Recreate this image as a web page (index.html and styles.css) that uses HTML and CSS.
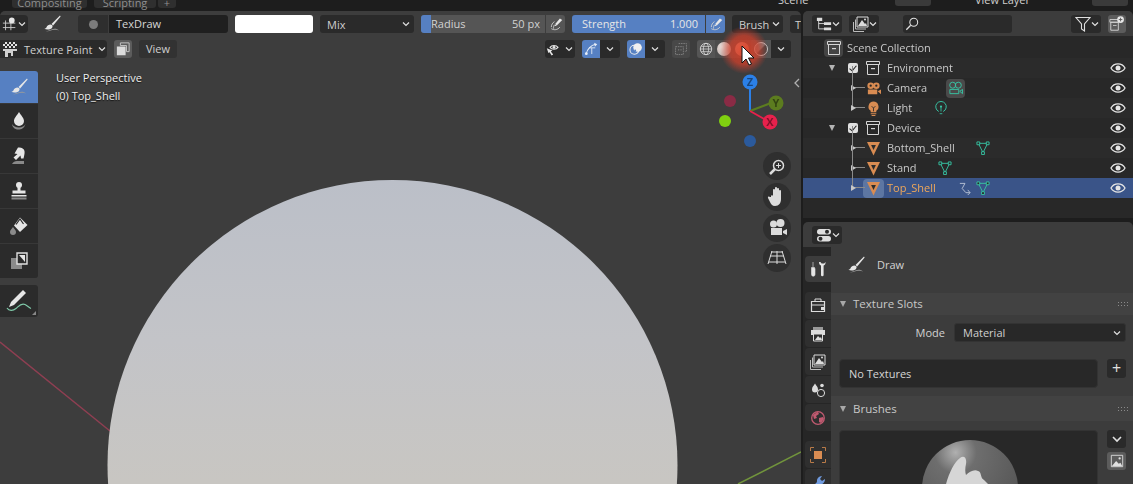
FILE: index.html
```html
<!DOCTYPE html>
<html lang="en">
<head>
<meta charset="utf-8">
<title>Texture Paint</title>
<link rel="stylesheet" href="styles.css">
</head>
<body>
<svg class="sprite" width="0" height="0">
  <defs>
    <symbol id="i-brush" viewBox="0 0 20 20">
      <path d="M18 1.500 9.500 10l1.600 1.600L18.600 2.400z" fill="#e6e6e6"/>
      <path d="M8.600 10.400c-2 0-3.400 1-4 2.600-.3 1-1.200 1.600-2.200 1.800 1.800 1 5.600 1 7.400-.6 1-1 .9-2.300.4-2.900z" fill="#e6e6e6"/>
      <path d="M4 17c3 1 5-1 8-1.200 2-.1 4 .3 5 .8-2-2.200-5-2.200-7.500-1.200-2 .8-3.500 1.600-5.500 1.600z" fill="#9a9a9a"/>
    </symbol>
    <symbol id="i-drop" viewBox="0 0 20 20">
      <path d="M10 1c2 3.500 5 6 5 9a5 5 0 0 1-10 0c0-3 3-5.500 5-9z" fill="#e6e6e6"/>
      <path d="M3 13c.5 4 4 6 7.500 5.500 3-.4 5.500-2.500 6-5.500-1 2-3.500 3.500-6.500 3.500S4 15 3 13z" fill="#8a8a8a"/>
    </symbol>
    <symbol id="i-smear" viewBox="0 0 20 20">
      <path d="M9 1.500c3-.5 6 .8 6.500 3.500.4 2.500-.5 5-1 7.500h-2.500l-.5-3L7 14 4.500 11.500l4-3.500-3-.5z" fill="#e6e6e6"/>
      <path d="M3 18c1-2 3-3 5-3h7v3z" fill="#8a8a8a"/>
    </symbol>
    <symbol id="i-stamp" viewBox="0 0 20 20">
      <circle cx="10" cy="4" r="3" fill="#e6e6e6"/>
      <path d="M8.500 6h3v3.500h5v3h-13v-3h5z" fill="#e6e6e6"/>
      <path d="M2.500 14h15v1.500h-15z" fill="#e6e6e6"/>
      <path d="M2.500 16.500h15v2h-15z" fill="#8a8a8a"/>
    </symbol>
    <symbol id="i-fill" viewBox="0 0 20 20">
      <path d="M11 1.500 18.500 9 11 16 5 9.500z" fill="#e6e6e6"/>
      <path d="M7 8.500 11 3l3.500 5" fill="none" stroke="#2b2b2b" stroke-width="1.200"/>
      <path d="M4 11c1.500 2 3 3.500 3 5a3 3 0 0 1-6 0c0-1.500 1.500-3 3-5z" fill="#8a8a8a"/>
    </symbol>
    <symbol id="i-clone" viewBox="0 0 20 20">
      <path d="M2 7h11v11H2z" fill="#8a8a8a"/>
      <path d="M8 2h10v11H8z" fill="#2b2b2b"/>
      <path d="M8 2h10v11H8z" fill="none" stroke="#e0e0e0" stroke-width="1.400"/>
      <path d="M10 4h6v7z" fill="#e6e6e6"/>
    </symbol>
    <symbol id="i-annot" viewBox="0 0 28 24">
      <path d="M18 1 6 13l-2 5 5-2L21 4z" fill="#e6e6e6"/>
      <path d="M2 19c2 3 6 3 9 .5s5-6 9-4c2 1 4 3 6 4" fill="none" stroke="#7fc8a8" stroke-width="1.200"/>
    </symbol>
    <symbol id="i-paintmode" viewBox="0 0 16 16">
      <path d="M1 1h14v6H1z" fill="#e0e0e0"/>
      <path d="M1 1h2v2H1zm4 0h2v2H5zm4 0h2v2H9zm4 0h2v2h-2zM3 3h2v2H3zm4 0h2v2H7zm4 0h2v2h-2zM1 5h2v2H1zm4 0h2v2H5zm4 0h2v2H9zm4 0h2v2h-2z" fill="#2b2b2b"/>
      <path d="M1 8h14v2h-4v5H9v-3H6v4H3v-6H1z" fill="#d0d0d0"/>
    </symbol>
    <symbol id="i-chev" viewBox="0 0 8 6"><path d="M1 1.500 4 4.500l3-3" fill="none" stroke="#e0e0e0" stroke-width="1.200"/></symbol>
    <symbol id="i-modeicon" viewBox="0 0 18 16">
      <path d="M1 7h14M1 12h14M4 4v11M10 6v9" fill="none" stroke="#cfcfcf" stroke-width="1"/>
      <circle cx="11" cy="4" r="3.200" fill="#e6e6e6"/>
    </symbol>
    <symbol id="i-wirebox" viewBox="0 0 16 16">
      <path d="M5 1h10v10h-3V4H5z" fill="none" stroke="#cfcfcf" stroke-width="1"/>
      <path d="M1 5h10v10H1z" fill="#dcdcdc"/>
    </symbol>
    <symbol id="i-falloff" viewBox="0 0 18 18">
      <path d="M14 2l3 2-7 7-2-2z" fill="#e8e8e8"/>
      <path d="M8 9.500 7 12l3-1z" fill="#e8e8e8"/>
      <path d="M3 13c0-3 1.500-5.500 4-7M6 15c-.5-2 0-3.500 1-5M3 15c3 2 8 2 11-2" fill="none" stroke="#cfcfcf" stroke-width="1.200"/>
    </symbol>
    <symbol id="i-vis" viewBox="0 0 20 16">
      <path d="M5 6c2-3 8-3 10 0-2 3-8 3-10 0z" fill="none" stroke="#e6e6e6" stroke-width="1.300"/>
      <circle cx="10" cy="6" r="1.800" fill="#e6e6e6"/>
      <path d="M1 7l7 3-2 1 3 4-2 1-2.500-4L3 13z" fill="#e6e6e6"/>
    </symbol>
    <symbol id="i-gizmo" viewBox="0 0 18 18">
      <path d="M3 15C4 9 9 4 15 3" fill="none" stroke="#e8eef8" stroke-width="1.300"/>
      <path d="M13 1l4 2-3 3z" fill="#e8eef8"/>
      <circle cx="3" cy="15" r="1.800" fill="#e8eef8"/>
      <path d="M6.500 7.500h8M10 7.500v8" fill="none" stroke="#e8eef8" stroke-width="1.100"/>
    </symbol>
    <symbol id="i-overlay" viewBox="0 0 18 18">
      <circle cx="7" cy="10" r="5.800" fill="none" stroke="#f0f0f0" stroke-width="1.300"/>
      <circle cx="11" cy="7" r="5.500" fill="#f0f0f0"/>
      <circle cx="8" cy="11" r="1.200" fill="#5680c2"/>
    </symbol>
    <symbol id="i-xray" viewBox="0 0 18 18">
      <path d="M6 2h10v10h-2M2 6h10v10H2z" fill="none" stroke="#8c8c8c" stroke-width="1" stroke-dasharray="2 1"/>
      <circle cx="6" cy="10" r=".8" fill="#8c8c8c"/><circle cx="9" cy="10" r=".8" fill="#8c8c8c"/>
    </symbol>
    <symbol id="i-wire" viewBox="0 0 16 16">
      <circle cx="8" cy="8" r="6.500" fill="none" stroke="#dcdcdc" stroke-width="1"/>
      <ellipse cx="8" cy="8" rx="3" ry="6.500" fill="none" stroke="#dcdcdc" stroke-width=".8"/>
      <path d="M1.500 8h13M2.500 5h11M2.500 11h11" fill="none" stroke="#dcdcdc" stroke-width=".8"/>
    </symbol>
    <symbol id="i-eye" viewBox="0 0 16 12">
      <path d="M1 6c3-5.500 11-5.500 14 0-3 5.500-11 5.500-14 0z" fill="none" stroke="#e6e6e6" stroke-width="1.300"/>
      <circle cx="8" cy="6" r="2.500" fill="#e6e6e6"/>
    </symbol>
    <symbol id="i-coll" viewBox="0 0 14 14">
      <path d="M.5.500h13v3H.5zM1.500 3.500h11v10h-11z" fill="none" stroke="#d4d4d4" stroke-width="1"/>
      <path d="M5 7h4v1.200H5z" fill="#d4d4d4"/>
    </symbol>
    <symbol id="i-camera" viewBox="0 0 16 14">
      <circle cx="5" cy="4" r="3.500" fill="#d98c52"/><circle cx="11" cy="4" r="3.500" fill="#d98c52"/>
      <circle cx="5" cy="4" r="1.200" fill="#282828"/><circle cx="11" cy="4" r="1.200" fill="#282828"/>
      <path d="M2 8h10v5H2zM12.500 10 16 8v5z" fill="#d98c52"/>
    </symbol>
    <symbol id="i-camdata" viewBox="0 0 16 14">
      <circle cx="5" cy="4" r="3.200" fill="none" stroke="#37c4a4" stroke-width="1"/><circle cx="11" cy="4" r="3.200" fill="none" stroke="#37c4a4" stroke-width="1"/>
      <path d="M2 8.500h9.500v4.500H2zM12.500 10.500 15.500 8.500v4.500z" fill="none" stroke="#37c4a4" stroke-width="1"/>
    </symbol>
    <symbol id="i-light" viewBox="0 0 14 16">
      <path d="M7 .5a5.500 5.500 0 0 1 3 10v1.500H4v-1.500A5.500 5.500 0 0 1 7 .5z" fill="#d98c52"/>
      <path d="M5 5.500l2 2 2-2M7 7.500V11" fill="none" stroke="#282828" stroke-width=".9"/>
      <path d="M4 13h6v1H4zM5 15h4v1H5z" fill="#d98c52"/>
    </symbol>
    <symbol id="i-lightdata" viewBox="0 0 14 16">
      <path d="M4.500 12A6 6 0 1 1 9.500 12" fill="none" stroke="#37c4a4" stroke-width="1.100"/>
      <circle cx="7" cy="6.500" r="1.300" fill="#37c4a4"/>
      <path d="M7 7.500v4.500M5.500 14.500h3" fill="none" stroke="#37c4a4" stroke-width="1"/>
    </symbol>
    <symbol id="i-mesh" viewBox="0 0 14 15">
      <path d="M.5 1h13L7 14.500z" fill="#d98c52"/>
      <path d="M4.600 4h4.800L7 9z" fill="#2c2c2c"/>
    </symbol>
    <symbol id="i-meshdata" viewBox="0 0 14 15">
      <path d="M2 2.500h10L7 12.500z" fill="none" stroke="#37c4a4" stroke-width="1"/>
      <path d="M.5 1h3v3h-3zM10.500 1h3v3h-3zM5.500 11.500h3v3h-3z" fill="#282828" stroke="#37c4a4" stroke-width="1"/>
    </symbol>
    <symbol id="i-mod" viewBox="0 0 14 14">
      <path d="M2 1.500h5.500L4.500 7l4 4.500H13M10.500 8.500 13 11.500l-2.500 2.500" fill="none" stroke="#b8c2d6" stroke-width="1"/>
    </symbol>
    <symbol id="i-tree" viewBox="0 0 18 16">
      <path d="M1 1h6v3.500H1zM9 6h8v3H9zM9 12h8v3H9z" fill="#dcdcdc"/>
      <path d="M3 4.500V13.500h6M3 7.500h6" fill="none" stroke="#dcdcdc" stroke-width="1"/>
    </symbol>
    <symbol id="i-images" viewBox="0 0 16 16">
      <path d="M4 1h11v10H4z" fill="none" stroke="#dcdcdc" stroke-width="1"/>
      <path d="M5 10l4-6 3 4 1-1 1 3z" fill="#dcdcdc"/><circle cx="12" cy="3.500" r="1" fill="#dcdcdc"/>
      <path d="M2.500 3.500V13H13M.5 6v9.500H11" fill="none" stroke="#bcbcbc" stroke-width="1"/>
    </symbol>
    <symbol id="i-search" viewBox="0 0 16 16">
      <circle cx="10" cy="6" r="4.500" fill="none" stroke="#e0e0e0" stroke-width="1.200"/>
      <path d="M6.500 9.500 1.500 14.500" stroke="#e0e0e0" stroke-width="1.500"/>
    </symbol>
    <symbol id="i-filter" viewBox="0 0 16 16"><path d="M1 1.500h14L9.500 8v7l-3-2V8z" fill="none" stroke="#e0e0e0" stroke-width="1.100"/></symbol>
    <symbol id="i-newcoll" viewBox="0 0 18 18">
      <path d="M1 4h10v3H1zM2 7h8.500v9H2z" fill="none" stroke="#d8d8d8" stroke-width="1"/>
      <path d="M4.500 10h4v1h-4z" fill="#d8d8d8"/>
      <circle cx="13" cy="4" r="3.800" fill="#e8e8e8"/>
      <path d="M11 4h4M13 2v4" stroke="#585858" stroke-width="1"/>
    </symbol>
    <symbol id="i-editor" viewBox="0 0 16 14">
      <rect x="1" y="1" width="14" height="5.500" rx="2.700" fill="#e0e0e0"/>
      <rect x="1" y="8" width="14" height="5.500" rx="2.700" fill="#e0e0e0"/>
      <circle cx="11" cy="3.700" r="2" fill="#2b2b2b"/><circle cx="4.500" cy="10.700" r="2" fill="#2b2b2b"/>
    </symbol>
    <symbol id="i-tool" viewBox="0 0 16 16">
      <path d="M3 1v5M1.500 6.500h3L5 8v5.500a1.500 1.500 0 0 1-3.500 0V8z" fill="#e6e6e6" stroke="#e6e6e6" stroke-width=".6"/>
      <path d="M9 1c0 2 .5 3 2 3.500V14a1.300 1.300 0 0 0 2.600 0V4.500c1.500-.5 2-1.500 2-3.500l-1.500 1.500h-2.500L10.400 1z" fill="#e6e6e6"/>
    </symbol>
    <symbol id="i-render" viewBox="0 0 16 16">
      <path d="M5 1h6v2.500H5z" fill="none" stroke="#dcdcdc" stroke-width="1"/>
      <path d="M1.500 3.500h13v10h-13z" fill="none" stroke="#dcdcdc" stroke-width="1.200"/>
      <path d="M2 6.500h12v1H2zM11 9h3v3h-3z" fill="#dcdcdc"/>
    </symbol>
    <symbol id="i-output" viewBox="0 0 16 16">
      <path d="M1 4h14v5H1z" fill="#dcdcdc"/><path d="M3 1h10v3H3z" fill="#9a9a9a"/>
      <path d="M3.500 8h9v7h-9z" fill="#2c2c2c" stroke="#dcdcdc"/><path d="M5 14l3-4 2 2 1-1 1 3z" fill="#dcdcdc"/>
    </symbol>
    <symbol id="i-scene" viewBox="0 0 16 16">
      <path d="M5 1.500c1.500 2.500 3 3.500 3 6a3 3 0 0 1-6 0c0-2.500 1.500-3.500 3-6z" fill="#dcdcdc"/>
      <circle cx="11" cy="11" r="3.600" fill="#2c2c2c" stroke="#dcdcdc"/><circle cx="12" cy="3.500" r="1.800" fill="#dcdcdc"/>
    </symbol>
    <symbol id="i-world" viewBox="0 0 16 16">
      <circle cx="8" cy="8" r="6.300" fill="none" stroke="#c05a70" stroke-width="1.300"/>
      <path d="M3 5c2-1 3-3 5-3l1 2-3 2 1 2-3 1zM9 8l4-1 1 2-3 4-2-1z" fill="#c05a70"/>
    </symbol>
    <symbol id="i-object" viewBox="0 0 16 16">
      <path d="M4 4h8v8H4z" fill="#d98c52"/>
      <path d="M.5 4V.5H4M12 .5h3.500V4M15.500 12v3.500H12M4 15.500H.5V12" fill="none" stroke="#b87a48" stroke-width="1"/>
    </symbol>
    <symbol id="i-wrench" viewBox="0 0 16 16">
      <path d="M15 4 12 6 10 4l2-3a5 5 0 0 0-5 6L1.500 13 4 15.500 9.500 9.500A5 5 0 0 0 15 4z" fill="#6f9ade"/>
    </symbol>
    <symbol id="i-picture" viewBox="0 0 16 16">
      <path d="M1.500 1.500h13v13h-13z" fill="none" stroke="#e0e0e0"/>
      <path d="M2 14l5-6 3 3 2-1 2 4z" fill="#e0e0e0"/><circle cx="11" cy="5" r="1.300" fill="#e0e0e0"/>
    </symbol>
  </defs>
</svg>

<div class="app">
  <div class="topbar">
    <span class="tab tab-a">Compositing</span>
    <span class="tab tab-b">Scripting</span>
    <span class="tab tab-c">+</span>
    <span class="top-scene">Scene</span>
    <span class="top-box top-box-a"></span>
    <span class="top-layer">View Layer</span>
    <span class="top-box top-box-b"></span>
  </div>
  <div class="main">
    <section class="viewport">
      <svg class="scene-bg" viewBox="0 11 801 473" width="801" height="473">
        <defs>
          <linearGradient id="ball" x1="0" y1="0" x2="0" y2="1">
            <stop offset="0" stop-color="#bbbfc8"/>
            <stop offset=".28" stop-color="#c3c4c8"/>
            <stop offset=".53" stop-color="#c8c6c2"/>
          </linearGradient>
        </defs>
        <path d="M0 342 110 431" stroke="#8f3f52" stroke-width="1.500"/>
        <path d="M738 484 801 452" stroke="#71943c" stroke-width="1.500"/>
        <circle cx="392.500" cy="465" r="285" fill="url(#ball)"/>
      </svg>

      <div class="hdr hdr-tool">
        <button class="btn dark w-mode"><svg class="ic16"><use href="#i-modeicon"/></svg><svg class="chev"><use href="#i-chev"/></svg></button>
        <svg class="ic-brush"><use href="#i-brush"/></svg>
        <div class="brushsel">
          <span class="brushsel-ic"><span class="ballmini"></span></span>
          <span class="brushsel-name">TexDraw</span>
        </div>
        <span class="swatch"></span>
        <button class="btn dark w-mix"><span>Mix</span><svg class="chev"><use href="#i-chev"/></svg></button>
        <div class="slider s-radius"><span class="fill"></span><span class="s-label">Radius</span><span class="s-val">50 px</span></div>
        <button class="pen"><svg class="ic14"><use href="#i-falloff"/></svg></button>
        <div class="slider s-strength"><span class="s-label">Strength</span><span class="s-val">1.000</span></div>
        <button class="pen on"><svg class="ic14"><use href="#i-falloff"/></svg></button>
        <button class="btn dark w-brush"><span>Brush</span><svg class="chev"><use href="#i-chev"/></svg></button>
        <button class="btn dark w-cut"><span>T</span></button>
      </div>

      <div class="hdr hdr-view">
        <button class="btn dark w-tp"><svg class="ic16"><use href="#i-paintmode"/></svg><span>Texture Paint</span><svg class="chev"><use href="#i-chev"/></svg></button>
        <button class="sq grey"><svg class="ic14"><use href="#i-wirebox"/></svg></button>
        <button class="btn dim w-view"><span class="up">View</span></button>
        <div class="hdr-right">
          <div class="grp"><span class="cell c-dark w18"><svg class="ic16"><use href="#i-vis"/></svg></span><span class="cell c-dark w12"><svg class="chev"><use href="#i-chev"/></svg></span></div>
          <div class="grp"><span class="cell c-blue w18"><svg class="ic14"><use href="#i-gizmo"/></svg></span><span class="cell c-dark w20"><svg class="chev"><use href="#i-chev"/></svg></span></div>
          <div class="grp"><span class="cell c-blue w18"><svg class="ic14"><use href="#i-overlay"/></svg></span><span class="cell c-dark w20"><svg class="chev"><use href="#i-chev"/></svg></span></div>
          <span class="cell c-dis w18 solo"><svg class="ic14"><use href="#i-xray"/></svg></span>
          <div class="grp">
            <span class="cell c-grey w18"><svg class="ic14"><use href="#i-wire"/></svg></span>
            <span class="cell c-mid w18"><span class="shade shade-solid"></span></span>
            <span class="cell c-mid w18"><span class="shade shade-mat"></span></span>
            <span class="cell c-grey w20"><span class="shade shade-rend"></span></span>
            <span class="cell c-dark w20"><svg class="chev"><use href="#i-chev"/></svg></span>
          </div>
        </div>
      </div>

      <div class="vp-body">
        <div class="tools">
          <div class="toolgrp">
            <span class="tool active"><svg class="ic20"><use href="#i-brush"/></svg></span>
            <span class="tool"><svg class="ic20"><use href="#i-drop"/></svg></span>
            <span class="tool"><svg class="ic20"><use href="#i-smear"/></svg></span>
            <span class="tool"><svg class="ic20"><use href="#i-stamp"/></svg></span>
            <span class="tool"><svg class="ic20"><use href="#i-fill"/></svg></span>
            <span class="tool"><svg class="ic20"><use href="#i-clone"/></svg></span>
          </div>
          <div class="toolgrp annot"><svg class="ic-annot"><use href="#i-annot"/></svg></div>
        </div>
        <div class="vp-info">
          <div>User Perspective</div>
          <div>(0) Top_Shell</div>
        </div>
      </div>

      <svg class="overlay" viewBox="0 11 801 473" width="801" height="473">
        <defs>
          <radialGradient id="glow">
            <stop offset="0" stop-color="#e23b20" stop-opacity=".85"/>
            <stop offset=".6" stop-color="#d8402a" stop-opacity=".7"/>
            <stop offset="1" stop-color="#c84030" stop-opacity="0"/>
          </radialGradient>
        </defs>
        <circle cx="744" cy="50" r="24" fill="url(#glow)"/>
        <path d="M742 46v17l4-4 3 6 2.500-1-3-6h5.500z" fill="#fff" stroke="#111" stroke-width="1"/>

        <path d="M750 111V88" stroke="#2b80e8" stroke-width="2"/>
        <path d="M750 111 771 103" stroke="#5c7c1f" stroke-width="2"/>
        <path d="M750 111 766 120" stroke="#e8214c" stroke-width="2"/>
        <circle cx="750" cy="82" r="7.500" fill="#2b80e8"/>
        <circle cx="776" cy="103" r="7.500" fill="#5c7c1f"/>
        <circle cx="770" cy="122" r="7.500" fill="#e8214c"/>
        <circle cx="730" cy="101" r="6" fill="#8a2b45"/>
        <circle cx="725" cy="121" r="6" fill="#80d010"/>
        <circle cx="750" cy="141" r="6" fill="#2b5a9c"/>
        <text class="gz" x="750" y="86">Z</text>
        <text class="gz" x="776" y="107">Y</text>
        <text class="gz" x="770" y="126">X</text>

        <path d="M799 79 795 83 799 87" fill="none" stroke="#b0b0b0" stroke-width="1.300"/>

        <g fill="#2f2f2f">
          <circle cx="777" cy="166" r="14"/><circle cx="777" cy="197" r="14"/>
          <circle cx="777" cy="228" r="14"/><circle cx="777" cy="258" r="14"/>
        </g>
        <g fill="none" stroke="#dcdcdc" stroke-width="1.500">
          <circle cx="778.500" cy="165.500" r="5"/>
          <path d="M775 169 770 174" stroke-width="2.500"/>
          <path d="M776 165.500h5M778.500 163v5" stroke-width="1"/>
          <path d="M770 256h14M769 262h16M771 252h12M772 251l-4 13M777 251v13M782 251l4 13" stroke-width="1"/>
        </g>
        <path d="M771 197v-1c0-1 2-1 2 0v-6c0-1.500 2-1.500 2 0v-2c0-1.500 2-1.500 2 0v1c0-1.500 2-1.500 2 0v2c0-1.500 2-1.500 2 0v8c0 4-2 7-6 7-3 0-4-2-5-4l-2-4c-.5-1.500 1-2 2-1z" fill="#dcdcdc"/>
        <circle cx="773.500" cy="224" r="3.500" fill="#dcdcdc"/><circle cx="780.500" cy="223" r="4" fill="#dcdcdc"/>
        <path d="M771 228h11v7h-11zM783 231l4-2v6l-4-2z" fill="#dcdcdc"/>
      </svg>
    </section>

    <aside class="right">
      <section class="outliner">
        <div class="ol-hdr">
          <button class="btn dark w-ol1"><svg class="ic16"><use href="#i-tree"/></svg><svg class="chev"><use href="#i-chev"/></svg></button>
          <button class="btn dark w-ol2"><svg class="ic16"><use href="#i-images"/></svg><svg class="chev"><use href="#i-chev"/></svg></button>
          <span class="search"><svg class="ic14"><use href="#i-search"/></svg></span>
          <button class="btn dark w-ol3"><svg class="ic16"><use href="#i-filter"/></svg><svg class="chev"><use href="#i-chev"/></svg></button>
          <button class="sq grey"><svg class="ic16"><use href="#i-newcoll"/></svg></button>
        </div>
        <div class="tree">
          <div class="row r-root"><span class="root-ic"><svg class="ic14"><use href="#i-coll"/></svg></span><span class="lbl">Scene Collection</span></div>
          <div class="row r-coll alt"><span class="tw"></span><span class="chk"></span><svg class="ic14"><use href="#i-coll"/></svg><span class="lbl">Environment</span><svg class="eye"><use href="#i-eye"/></svg></div>
          <div class="row r-obj"><span class="branch"></span><svg class="ic-obj"><use href="#i-camera"/></svg><span class="lbl">Camera</span><span class="data-box"><svg class="ic14"><use href="#i-camdata"/></svg></span><svg class="eye"><use href="#i-eye"/></svg></div>
          <div class="row r-obj alt"><span class="branch"></span><svg class="ic-obj"><use href="#i-light"/></svg><span class="lbl">Light</span><svg class="ic14 d-light"><use href="#i-lightdata"/></svg><svg class="eye"><use href="#i-eye"/></svg></div>
          <div class="row r-coll"><span class="tw"></span><span class="chk"></span><svg class="ic14"><use href="#i-coll"/></svg><span class="lbl">Device</span><svg class="eye"><use href="#i-eye"/></svg></div>
          <div class="row r-obj alt"><span class="branch"></span><svg class="ic-obj"><use href="#i-mesh"/></svg><span class="lbl">Bottom_Shell</span><svg class="ic14 d-bottom"><use href="#i-meshdata"/></svg><svg class="eye"><use href="#i-eye"/></svg></div>
          <div class="row r-obj"><span class="branch"></span><svg class="ic-obj"><use href="#i-mesh"/></svg><span class="lbl">Stand</span><svg class="ic14 d-stand"><use href="#i-meshdata"/></svg><svg class="eye"><use href="#i-eye"/></svg></div>
          <div class="row r-obj sel"><span class="branch"></span><span class="sel-ic"><svg class="ic-obj"><use href="#i-mesh"/></svg></span><span class="lbl">Top_Shell</span><svg class="ic13 d-mod"><use href="#i-mod"/></svg><svg class="ic14 d-top"><use href="#i-meshdata"/></svg><svg class="eye"><use href="#i-eye"/></svg></div>
        </div>
      </section>

      <section class="props">
        <div class="props-hdr"><button class="btn dark w-ol1"><svg class="ic16"><use href="#i-editor"/></svg><svg class="chev"><use href="#i-chev"/></svg></button></div>
        <div class="props-body">
          <nav class="tabs">
            <span class="ptab active"><svg class="ic16"><use href="#i-tool"/></svg></span>
            <div class="tabgrp">
              <span class="ptab"><svg class="ic16"><use href="#i-render"/></svg></span>
              <span class="ptab"><svg class="ic16"><use href="#i-output"/></svg></span>
              <span class="ptab"><svg class="ic16"><use href="#i-images"/></svg></span>
              <span class="ptab"><svg class="ic16"><use href="#i-scene"/></svg></span>
              <span class="ptab"><svg class="ic16"><use href="#i-world"/></svg></span>
            </div>
            <div class="tabgrp">
              <span class="ptab"><svg class="ic16"><use href="#i-object"/></svg></span>
              <span class="ptab"><svg class="ic16"><use href="#i-wrench"/></svg></span>
            </div>
          </nav>
          <div class="panel">
            <div class="toolname"><svg class="ic20"><use href="#i-brush"/></svg><span class="up">Draw</span></div>
            <div class="sec-hd"><span class="caret"></span><span class="up">Texture Slots</span><span class="grip"></span></div>
            <div class="sec-slots">
              <div class="mode-row"><span class="mode-lbl">Mode</span><button class="btn dark w-material"><span>Material</span><svg class="chev"><use href="#i-chev"/></svg></button></div>
              <div class="list-row"><div class="nolist">No Textures</div><button class="sq dark2 plus">+</button></div>
            </div>
            <div class="sec-hd sec-brushes"><span class="caret"></span><span>Brushes</span><span class="grip"></span></div>
            <div class="list-row brush-row">
              <div class="preview">
                <div class="preview-ball">
                  <svg class="preview-mark" viewBox="0 0 96 60" width="96" height="60">
                    <path d="M23 48C26 35 32 22 38 18C42 15 45 18 44 24C43 28 43 32 44 35C47 32 52 29 56 31C60 32 58 38 62 40L70 48z" fill="#d6d6d6"/>
                  </svg>
                </div>
              </div>
              <div class="side-btns">
                <button class="sq dark2"><svg class="chev chev-lg"><use href="#i-chev"/></svg></button>
                <button class="sq grey"><svg class="ic14"><use href="#i-picture"/></svg></button>
              </div>
            </div>
          </div>
        </div>
      </section>
    </aside>
  </div>
</div>
</body>
</html>
```

FILE: styles.css
```css
* { box-sizing: border-box; }
html, body { margin: 0; padding: 0; background: #1d1d1d; }
body {
  width: 1133px;
  height: 484px;
  overflow: hidden;
  font-family: "Open Sans", "DejaVu Sans", sans-serif;
  font-size: 11px;
  color: #d2d2d2;
  white-space: nowrap;
}
.sprite { position: absolute; }
button { font: inherit; color: inherit; border: 0; padding: 0; margin: 0; }
svg { display: block; flex: none; }
.up { padding-bottom: 2px; }

.app { display: flex; flex-direction: column; width: 1133px; height: 484px; filter: blur(.35px); }

/* top strip */
.topbar { display: flex; height: 11px; overflow: hidden; background: #1d1d1d; flex: none; }
.tab, .top-box { height: 20px; margin-top: -12px; border-radius: 3px; background: #2f2f2f; color: #8e8e8e; text-align: center; line-height: 29px; flex: none; }
.tab-a { width: 75px; margin-left: 12px; }
.tab-b { width: 62px; margin-left: 7px; }
.tab-c { width: 18px; margin-left: 2px; }
.top-scene { width: 30px; margin: -8px 0 0 602px; color: #cfcfcf; height: 13px; flex: none; }
.top-box { width: 36px; height: 18px; background: #3a3a3a; }
.top-box-a { margin-left: 87px; }
.top-layer { width: 60px; margin: -8px 0 0 44px; color: #cfcfcf; height: 13px; flex: none; }
.top-box-b { margin-left: 57px; }

.main { display: flex; gap: 2px; flex: 1; min-height: 0; }

/* viewport */
.viewport { position: relative; width: 801px; flex: none; background: #3d3d3d; overflow: hidden; border-radius: 5px 5px 0 0; }
.scene-bg { position: absolute; left: 0; top: 0; }
.overlay { position: absolute; left: 0; top: 0; pointer-events: none; }
.gz { font-family: "Open Sans", sans-serif; font-size: 11px; font-weight: 700; text-anchor: middle; fill: rgba(0,0,0,.45); }

.hdr { position: relative; display: flex; align-items: center; }
.hdr > * { flex: none; }
.hdr-tool { height: 25px; padding-top: 1px; }
.hdr-view { height: 26px; }
.hdr-right { display: flex; align-items: center; gap: 7px; margin-left: auto; padding-right: 10px; }

.btn { display: flex; align-items: center; height: 18px; border-radius: 3px; color: #cfcfcf; text-align: left; }
.dark { background: #2a2a2a; }
.dim { background: #323232; justify-content: center; }
.chev { width: 8px; height: 6px; margin-left: auto; }
.chev-lg { width: 12px; height: 8px; margin: 0; }
.ic13 { width: 13px; height: 13px; }
.ic14 { width: 14px; height: 14px; }
.ic16 { width: 16px; height: 16px; }
.ic20 { width: 20px; height: 20px; }
.ic-obj { width: 15px; height: 15px; }

.w-mode { width: 28px; padding: 0 4px 0 2px; border-radius: 0 4px 4px 0; }
.ic-brush { width: 20px; height: 20px; margin-left: 14px; }
.brushsel { display: flex; width: 150px; height: 18px; margin-left: 16px; border-radius: 3px; overflow: hidden; }
.brushsel-ic { display: flex; align-items: center; justify-content: center; width: 30px; background: #2e2e2e; margin-right: 1px; }
.ballmini { width: 9px; height: 9px; border-radius: 50%; background: #7c7c7c; }
.brushsel-name { flex: 1; background: #1f1f1f; padding-left: 7px; line-height: 18px; color: #d6d6d6; }
.swatch { width: 78px; height: 18px; margin-left: 7px; border-radius: 3px; background: #fff; }
.w-mix { width: 94px; margin-left: 7px; padding: 0 4px 0 7px; }

.slider { position: relative; display: flex; justify-content: space-between; align-items: center; height: 18px; overflow: hidden; }
.s-radius { width: 124px; margin-left: 7px; padding: 0 5px 0 10px; background: #555; border-radius: 3px 0 0 3px; }
.s-strength { width: 133px; margin-left: 7px; padding: 0 7px 0 10px; background: #5680c2; border-radius: 3px 0 0 3px; color: #e6e6e6; }
.fill { position: absolute; left: 0; top: 0; bottom: 0; width: 10px; background: #5680c2; }
.s-label, .s-val { position: relative; padding-bottom: 2px; }
.pen { display: flex; align-items: center; justify-content: center; width: 19px; height: 18px; margin-left: 1px; background: #555; border-radius: 0 3px 3px 0; }
.pen.on { background: #5680c2; }
.w-brush { width: 51px; margin-left: 7px; padding: 0 3px 0 7px; }
.w-cut { width: 20px; margin-left: 7px; padding-left: 5px; }

.w-tp { width: 107px; padding: 0 5px 0 2px; border-radius: 0 4px 4px 0; gap: 6px; }
.sq { display: flex; align-items: center; justify-content: center; width: 18px; height: 18px; border-radius: 3px; flex: none; }
.grey { background: #5c5c5c; }
.dark2 { background: #2a2a2a; }
.hdr-view .sq { margin-left: 7px; }
.w-view { width: 38px; margin-left: 7px; }

.grp { display: flex; border-radius: 3px; overflow: hidden; }
.cell { display: flex; align-items: center; justify-content: center; height: 18px; }
.w12 { width: 12px; }
.w18 { width: 18px; }
.w20 { width: 20px; }
.c-dark { background: #2a2a2a; }
.c-blue { background: #5680c2; }
.c-grey { background: #555; }
.c-mid { background: #4c4c4c; }
.c-dis { background: #484848; }
.solo { border-radius: 3px; }
.c-dark .chev { margin: 0; }
.shade { display: block; width: 14px; height: 14px; border-radius: 50%; }
.shade-solid { background: radial-gradient(circle at 35% 35%, #e8dcd8, #b8aaa6); }
.shade-mat { background: radial-gradient(circle at 35% 35%, #e0b0a0, #a08078); }
.shade-rend { border: 1px solid #c8c8c8; background: linear-gradient(135deg, #7c7c7c 45%, #444 55%); }

.vp-body { position: relative; display: flex; margin-top: 9px; }
.tools { display: flex; flex-direction: column; gap: 7px; width: 38px; }
.toolgrp { display: flex; flex-direction: column; gap: 1px; border-radius: 0 3px 3px 0; overflow: hidden; background: #383838; }
.tool { display: flex; align-items: center; justify-content: center; height: 34px; background: #2b2b2b; }
.tool.active { height: 32px; background: #5680c2; }
.annot { position: relative; height: 32px; align-items: center; justify-content: center; background: #2b2b2b; }
.ic-annot { width: 28px; height: 24px; }
.annot::after { content: ""; position: absolute; right: 2px; bottom: 2px; border: 2px solid transparent; border-right-color: #888; border-bottom-color: #888; }
.vp-info { margin-left: 18px; margin-top: -2px; line-height: 18px; color: #f0f0f0; text-shadow: 0 1px 1px #111; }

/* right column */
.right { display: flex; flex-direction: column; gap: 4px; flex: 1; min-width: 0; }
.outliner { display: flex; flex-direction: column; height: 207px; background: #282828; border-radius: 5px 5px 0 0; overflow: hidden; flex: none; }
.ol-hdr { display: flex; align-items: center; height: 25px; padding-left: 9px; padding-right: 7px; background: #3c3c3c; flex: none; }
.w-ol1, .w-ol2, .w-ol3 { width: 30px; padding: 0 3px 0 4px; }
.w-ol2 { margin-left: 7px; }
.search { display: flex; align-items: center; width: 109px; height: 18px; margin-left: 24px; padding-left: 2px; background: #2a2a2a; border-radius: 3px; }
.w-ol3 { margin-left: auto; }
.ol-hdr .sq { margin-left: 7px; }

.tree { position: relative; padding-top: 2px; }
.row { position: relative; display: flex; align-items: center; height: 20px; padding-right: 7px; color: #c8c8c8; }
.alt { background: #2b2b2b; }
.lbl { padding-bottom: 2px; }
.r-root { padding-left: 21px; }
.root-ic { display: flex; align-items: center; justify-content: center; width: 19px; height: 18px; background: #444; border-radius: 4px; }
.r-root .lbl { margin-left: 4px; }
.r-coll { padding-left: 26px; }
.tw { width: 19px; height: 6px; position: relative; }
.tw::before { content: ""; position: absolute; left: 0; top: 0; border-left: 3.500px solid transparent; border-right: 3.500px solid transparent; border-top: 6px solid #b4b4b4; }
.chk { position: relative; width: 10px; height: 10px; margin-right: 8px; background: #e0e0e0; border-radius: 2px; flex: none; }
.chk::after { content: ""; position: absolute; left: 3px; top: 1px; width: 3px; height: 6px; border: solid #222; border-width: 0 1.500px 1.500px 0; transform: rotate(40deg); }
.r-coll .lbl { margin-left: 7px; }
.r-obj .lbl { margin-left: 6px; }
.r-obj { padding-left: 63px; }
.branch { position: absolute; left: 49px; top: -12px; width: 13px; height: 22px; border-left: 1px solid #8a8a8a; border-bottom: 1px solid #8a8a8a; }
.branch::after { content: ""; position: absolute; left: -2px; bottom: -3.500px; border-top: 3px solid transparent; border-bottom: 3px solid transparent; border-left: 5px solid #c8c8c8; }
.eye { width: 16px; height: 12px; margin-left: auto; }
.data-box { display: flex; align-items: center; justify-content: center; width: 19px; height: 19px; margin-left: 19px; background: #4a4a4a; border-radius: 4px; }
.data-box .ic14 { width: 15px; height: 14px; }
.d-light { margin-left: 22px; }
.d-bottom { margin-left: 21px; }
.d-stand { margin-left: 21px; }
.d-mod { margin-left: 22px; }
.d-top { margin-left: 5px; }
.sel { background: #3a5488; color: #f0a85a; }
.sel-ic { display: flex; align-items: center; justify-content: center; width: 21px; height: 19px; margin: 0 -3px; background: #5d76a2; border-radius: 4px; }

.props { display: flex; flex-direction: column; flex: 1; min-height: 0; background: #3c3c3c; border-radius: 5px 5px 0 0; overflow: hidden; }
.props-hdr { display: flex; align-items: center; height: 25px; padding-left: 9px; flex: none; }
.props-body { display: flex; flex: 1; min-height: 0; }
.tabs { display: flex; flex-direction: column; gap: 10px; width: 28px; padding: 9px 0 0 2px; background: #262626; flex: none; }
.tabgrp { display: flex; flex-direction: column; gap: 1px; }
.ptab { display: flex; align-items: center; justify-content: center; width: 26px; height: 27px; background: #2f2f2f; border-radius: 4px 0 0 4px; flex: none; }
.ptab.active { height: 26px; background: #3c3c3c; }

.panel { flex: 1; min-width: 0; background: #3c3c3c; }
.toolname { display: flex; align-items: center; height: 46px; padding: 0 0 10px 15px; gap: 11px; }
.sec-hd { display: flex; align-items: center; height: 22px; padding: 0 5px 0 8px; background: #424242; font-size: 11.500px; color: #c8c8c8; }
.caret { width: 0; height: 0; margin: 0 7px 0 1px; border-left: 3.500px solid transparent; border-right: 3.500px solid transparent; border-top: 6px solid #a8a8a8; box-sizing: content-box; }
.grip { width: 11px; height: 6px; margin-left: auto; background-image: radial-gradient(circle, #8a8a8a .9px, transparent 1px); background-size: 3px 3px; }
.sec-slots { height: 81px; padding-top: 8px; }
.mode-row { display: flex; align-items: center; justify-content: flex-end; height: 19px; padding-right: 7px; gap: 9px; }
.w-material { width: 172px; height: 19px; padding: 0 4px 0 8px; background: #282828; border: 1px solid #333; }
.list-row { display: flex; gap: 9px; padding: 0 7px 0 8px; align-items: flex-start; }
.sec-slots .list-row { margin-top: 17px; }
.nolist { display: flex; align-items: center; flex: 1; height: 29px; padding-left: 9px; background: #282828; border: 1px solid #333; border-radius: 4px; color: #d6d6d6; }
.plus { height: 19px; width: 19px; font-size: 16px; line-height: 19px; color: #e0e0e0; font-weight: 400; }
.sec-brushes { height: 25px; }
.brush-row { margin-top: 9px; }
.preview { position: relative; flex: 1; height: 120px; background: #282828; border: 1px solid #333; border-radius: 4px; overflow: hidden; }
.preview-ball { position: absolute; left: 82px; top: 9px; width: 96px; height: 96px; border-radius: 50%; background: radial-gradient(circle at 35% 13%, #b0b0b0 0, #6e6e6e 20%, #565656 70%, #707070 100%); }
.preview-mark { position: absolute; left: 0; top: 0; }
.side-btns { display: flex; flex-direction: column; gap: 4px; }
.side-btns .sq { width: 19px; }
```
